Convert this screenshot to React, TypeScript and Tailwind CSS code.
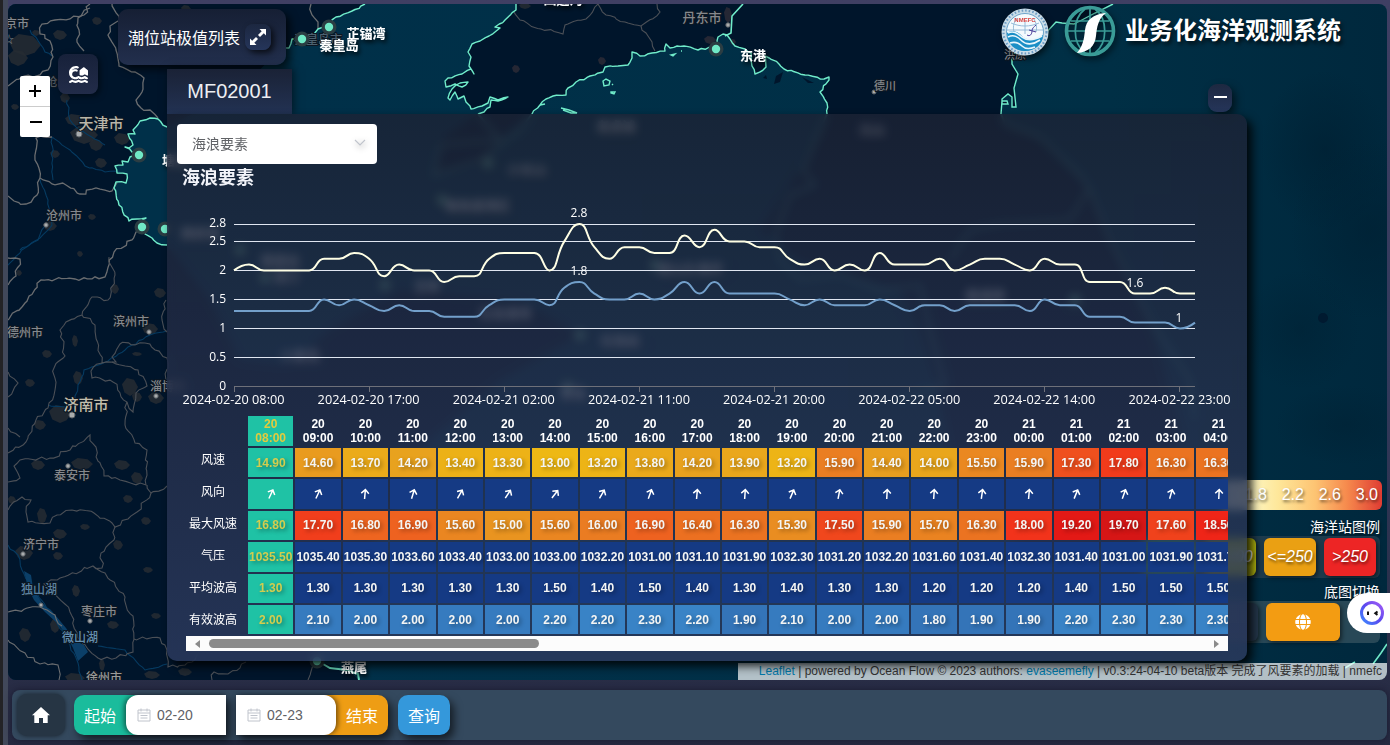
import React from "react";
import { FaHouseTsunami } from "react-icons/fa6";
import { FaGlobe } from "react-icons/fa";

type Pt = [number, number];

const parse = (s: string): Pt[] =>
  s.split(" ").map((p) => p.split(",").map(Number) as unknown as Pt);

/* Subdivides a polyline with a deterministic wobble so borders look natural. */
function rough(s: string, amp = 2, step = 4): string {
  const pts = parse(s);
  let seed = pts.length * 37 + Math.round(pts[0][0]);
  const rnd = () => {
    seed = (seed * 16807 + 11) % 2147483647;
    return (seed / 2147483647 - 0.5) * 2;
  };
  const out: string[] = [];
  pts.forEach((p, i) => {
    if (i > 0) {
      const a = pts[i - 1];
      const n = Math.floor(Math.hypot(p[0] - a[0], p[1] - a[1]) / step);
      for (let k = 1; k < n; k++) {
        const t = k / n;
        out.push(
          `${(a[0] + (p[0] - a[0]) * t + rnd() * amp).toFixed(1)},${(a[1] + (p[1] - a[1]) * t + rnd() * amp).toFixed(1)}`,
        );
      }
    }
    out.push(`${p[0]},${p[1]}`);
  });
  return out.join(" ");
}

const BOHAI =
  "167,127 158,119 150,118 140,121 133,130 135,134 128,134 133,145 129,148 125,147 132,152 138,155 130,157 128,162 122,161 123,165 115,166 117,173 127,174 126,183 116,182 114,188 119,205 129,221 137,219 146,218 140,223 145,234 152,238 157,243 167,245";
const QHD = "365,4 352,11 336,17 328,24 318,29 314,34 302,38 292,39 289,48 280,49";
const LIAO_W =
  "516,4 516,10 505,20 495,27 500,28 489,36 480,41 472,44 468,52 471,57 469,66 474,74 471,69 462,74 448,78 445,81 446,87 455,84 462,87 468,82 460,83 452,89 448,98 450,100 455,92 458,99 464,96 466,102 470,106 471,109 482,106 488,103 490,97 498,100 508,97 498,101 491,100 490,107 484,112 478,114";
const LIAO_E =
  "532,114 540,105 546,99 553,96 566,95 568,88 576,82 590,76 603,72 605,67 618,66 628,65 632,58 632,52 640,56 652,53 665,51 666,44 670,48 684,46 698,50 712,47 717,44 718,37 723,34 727,35 735,46 745,49 751,53 752,66 755,74 766,67 765,56 779,64 784,69 805,75 824,79 829,77 829,80 820,92 827,103 827,114";
const KOREA_E =
  "1113,4 1095,13 1078,22 1074,24 1062,23 1056,22 1044,35 1012,55 1012,64 1018,74 1014,88 1016,107 1012,107 1012,97 1008,94 1002,99 1002,104 1008,104 1007,101 1002,101 1001,114";

const BORDERS = [
  "90,4 84,15 70,19 55,20 42,24 40,34 50,41 53,57 48,70 40,75 24,76 8,86",
  "90,8 78,18 79,30 77,42 84,51",
  "112,4 120,20 110,26 108,35 116,50 119,66 135,72 144,78 142,92 136,100 141,108 150,110 158,118",
  "52,137 36,138 35,160 40,178 52,184 66,185 80,194 96,188 112,191 117,183",
  "40,178 37,195 26,204 14,201 8,196",
  "311,4 312,15 318,22 318,29",
  "8,320 25,303 41,280 75,279 105,277 114,252 132,240 140,226",
  "8,258 20,259 16,276 8,285",
  "109,257 115,275 108,300 92,297 82,315 66,322 60,330 65,356 54,368 55,390 48,408 36,420 26,442 8,453",
  "82,315 95,325 102,363 116,362 112,357 120,344 145,343 155,350 167,358 166,380",
  "102,363 91,371 92,378 113,382 127,402 133,412 136,393 147,386 138,370 112,362",
  "127,402 125,425 135,443 147,450 146,485 120,480 104,476 90,435 70,450 50,458 20,460 14,466 20,478 8,482",
  "147,485 151,493 137,512 128,519 115,527 112,523 94,513 72,510 57,515 50,523 28,522 26,512 31,500 22,497 8,510",
  "151,493 167,486",
  "115,527 114,540 101,553 102,568 93,566 60,578 44,584 55,594 70,612 80,640 98,658 116,658 133,652 134,626 125,597 105,573 93,566",
  "8,612 40,607 55,615 62,626",
  "8,640 25,653 40,664 58,665 59,680",
  "134,639 160,638 167,650 168,667 192,662 200,650",
  "212,680 214,672 228,674 240,668 246,662",
  "316,664 308,680",
  "514,12 520,20 541,29 563,34 565,25 586,19 598,4 606,15 625,22 641,26 660,12 657,4",
  "641,26 648,36 652,42 655,51",
  "8,372 18,383 8,397",
  "166,300 162,320 167,332",
  "8,428 20,437",
];

const RIVERS = [
  "52,137 70,150 85,166 105,172 120,172",
  "52,138 53,180",
  "30,30 45,52 52,56",
  "67,100 70,120 80,130 105,145",
  "40,178 48,200 52,225 40,238 25,248 8,265",
  "20,250 38,240 45,226",
  "75,400 78,385 84,370 108,361 125,350 150,335 167,331",
  "48,405 65,407 76,398",
  "8,545 18,555 22,570 30,585 50,610 70,645 78,663 82,680",
  "98,646 125,650 145,670 167,664",
];

const BLOBS: [number, number, number, number][] = [
  [25, 45, 16, 11], [18, 58, 10, 8], [60, 35, 7, 5], [97, 21, 5, 4], [88, 76, 9, 6], [65, 98, 5, 5], [75, 120, 10, 6],
  [84, 135, 14, 9], [96, 145, 7, 6], [122, 139, 8, 6], [101, 163, 6, 5], [55, 154, 5, 4], [50, 226, 7, 5], [92, 217, 4, 3],
  [15, 107, 4, 3], [36, 33, 4, 3], [236, 60, 18, 4], [75, 341, 3, 6], [47, 354, 5, 4], [78, 378, 5, 7], [130, 387, 8, 9],
  [60, 414, 11, 9], [40, 425, 6, 5], [30, 383, 5, 4], [38, 465, 7, 5], [82, 464, 11, 6], [122, 465, 8, 5], [137, 478, 6, 6],
  [156, 398, 8, 6], [150, 329, 8, 6], [160, 293, 6, 5], [115, 289, 4, 5], [19, 273, 3, 3], [42, 516, 5, 8], [60, 534, 7, 5],
  [24, 553, 9, 7], [85, 527, 5, 3], [58, 556, 5, 4], [76, 591, 4, 6], [118, 545, 5, 5], [148, 570, 5, 3], [156, 616, 5, 3],
  [25, 635, 6, 7], [55, 626, 5, 7], [113, 625, 6, 4], [75, 678, 10, 5], [152, 675, 8, 4], [102, 665, 3, 6], [128, 499, 5, 4],
  [146, 521, 5, 4], [516, 69, 4, 4], [602, 61, 4, 4], [710, 40, 6, 4], [733, 42, 3, 3], [728, 15, 4, 8], [185, 672, 7, 4],
  [80, 254, 3, 3], [137, 397, 5, 5], [137, 354, 5, 2], [186, 9, 5, 4], [525, 6, 6, 3], [12, 500, 4, 4],
];

function MapCanvas() {
  const land = "#00152b";
  const cities: [string, number, number, number, string][] = [
    ["京市", 17, 28, 12, "#858a90"],
    ["天津市", 101, 129, 15, "#b9b5a8"],
    ["沧州市", 64, 220, 12, "#85888c"],
    ["滨州市", 131, 326, 12, "#85888c"],
    ["德州市", 25, 337, 12, "#85888c"],
    ["淄博市", 168, 391, 12, "#85888c"],
    ["济南市", 86, 410, 15, "#c3bfae"],
    ["泰安市", 72, 480, 12, "#85888c"],
    ["济宁市", 41, 549, 12, "#85888c"],
    ["独山湖", 39, 594, 12, "#5c83a1"],
    ["枣庄市", 99, 616, 12, "#85888c"],
    ["微山湖", 80, 642, 12, "#6590b0"],
    ["徐州市", 104, 682, 12, "#9a9a98"],
    ["丹东市", 702, 22, 13, "#85888c"],
    ["德川", 885, 90, 11, "#85888c"],
    ["洪原", 1015, 59, 11, "#85888c"],
    ["秦皇岛市", 318, 44, 12, "#4d6270"],
    ["沧", 52, 86, 11, "#50565e"],
  ];
  const stations: [number, number][] = [
    [302, 39], [329, 27], [139, 155], [142, 227], [165, 229], [716, 49], [317, 661],
    [488, 163], [442, 200], [240, 250], [265, 278], [385, 285], [580, 335], [655, 265], [1075, 300], [568, 387],
  ];
  const labels: [string, number, number][] = [
    ["芷锚湾", 366, 38], ["秦皇岛", 339, 50], ["东港", 753, 60], ["燕尾", 354, 672], ["塘沽", 175, 165],
    ["老虎滩", 616, 131], ["小长山", 527, 174], ["鲅鱼圈港区", 478, 210], ["黄骅港", 200, 238], ["蓬莱站", 280, 265],
    ["龙口", 286, 281], ["芝罘", 427, 291], ["成山头海洋", 690, 273], ["石岛站", 620, 345], ["石岛港湾", 505, 318],
    ["青岛", 573, 398], ["小麦岛", 300, 360], ["南浦港", 985, 300], ["元山", 872, 134], ["四道沟", 563, 4],
  ];
  return (
    <svg className="absolute inset-0 h-full w-full" viewBox="8 4 1379 676">
      <defs>
        <radialGradient id="deep" cx="0.5" cy="0.5" r="0.5">
          <stop offset="0" stopColor="#001e30" />
          <stop offset="1" stopColor="#001e30" stopOpacity="0" />
        </radialGradient>
        <linearGradient id="sea" x1="0" x2="1">
          <stop offset="0.2" stopColor="#003049" />
          <stop offset="0.8" stopColor="#002f45" />
          <stop offset="1" stopColor="#00283d" />
        </linearGradient>
        <filter id="halo" x="-20%" y="-20%" width="140%" height="160%">
          <feDropShadow dx="2" dy="3" stdDeviation="2" floodColor="#000" floodOpacity="0.8" />
        </filter>
      </defs>
      <rect x="8" y="4" width="1379" height="676" fill="url(#sea)" />
      <ellipse cx="1325" cy="150" rx="65" ry="80" fill="url(#deep)" opacity="0.6" />
      <ellipse cx="1370" cy="230" rx="80" ry="90" fill="url(#deep)" opacity="0.5" />
      <ellipse cx="1300" cy="330" rx="60" ry="60" fill="url(#deep)" opacity="0.4" />
      <ellipse cx="1323" cy="318" rx="5" ry="5" fill="#001a30" />
      <ellipse cx="1345" cy="425" rx="70" ry="40" fill="url(#deep)" opacity="0.4" />

      <polygon fill={land} points={`8,4 ${QHD} 240,90 200,110 ${BOHAI} 210,300 240,360 290,365 330,330 400,290 520,300 580,335 500,380 430,440 390,520 330,600 318,661 350,672 359,680 8,680`} />
      <polygon fill={land} points={`${LIAO_W} 440,140 435,175 480,165 510,130 ${LIAO_E} 800,170 760,230 800,260 900,290 920,330 940,400 960,500 1040,560 1150,540 1180,430 1150,320 1090,190 1040,140 1003,120 1001,114 ${KOREA_E.split(" ").reverse().join(" ")}`} />

      {BLOBS.map(([x, y, rx, ry], i) => (
        <polygon
          key={i}
          fill={i > 49 && i < 55 ? "#2b2a36" : "#262b33"}
          opacity="0.85"
          points={`${x - rx},${y - ry * 0.3} ${x - rx * 0.4},${y - ry} ${x + rx * 0.5},${y - ry * 0.8} ${x + rx},${y} ${x + rx * 0.6},${y + ry * 0.7} ${x},${y + ry} ${x - rx * 0.7},${y + ry * 0.6}`}
        />
      ))}
      {RIVERS.map((r, i) => (
        <polyline key={i} points={rough(r, 1)} fill="none" stroke="#053a60" strokeWidth="1.1" />
      ))}
      <polygon fill="#0b3f68" points="24,571 31,575 33,588 42,603 56,616 66,628 74,640 84,645 88,652 78,661 73,648 66,634 56,622 45,612 34,600 28,588" />
      {BORDERS.map((b, i) => (
        <polyline key={i} points={rough(b, i > 19 ? 1.4 : 1.8)} fill="none" stroke={i < 8 || i === 15 || i === 16 ? "#6a6d70" : "#4b5057"} strokeWidth={i < 8 ? 1.3 : 1.1} />
      ))}
      {[BOHAI, QHD, LIAO_W, LIAO_E].map((c, i) => (
        <polyline key={i} points={rough(c, 1.1, 3.5)} fill="none" stroke="#70ecca" strokeWidth="1.4" strokeLinejoin="round" />
      ))}
      <polyline points={KOREA_E} fill="none" stroke="#70ecca" strokeWidth="1.4" />
      <polyline points="725,36 731,33 732,16 743,4" fill="none" stroke="#70ecca" strokeWidth="1.6" />
      <path d="M603 81l3-2 4 2-1 4-5 1zM611 92l4 0-1 2-3-1zM612 84l1 1M671 55l4-1-2 2zM681 51l1 0M561 108l8 2 8 3-6 0-8-3M540 105l5-1" fill="none" stroke="#70ecca" strokeWidth="1.4" />
      <path d="M776 76l7-4-3 10-6 2zM763 78l3-3 1 4zM757 87l6 2M802 77l12 6-6 0z" fill="#00152b" />
      <g fill="none" stroke="#4c9c95" strokeWidth="2">
        <polyline points="827,114 803,170 815,185 790,195 775,235 780,260 800,280 840,275 880,290 920,285 930,330 945,385 900,400" />
        <polyline points="1001,114 1005,124 1040,137 1080,175 1090,190 1110,240 1150,320 1190,380 1195,420" />
        <polyline points="1088,190 1070,220 1000,224 970,230 950,260" />
        <polyline points="478,114 500,140 440,145 434,175 480,160 520,130 532,114" />
        <polyline points="318,661 330,668 347,670 358,674 359,680" stroke="#6fe8c8" />
      </g>
      <path d="M1373 664l8-11 6-9M1345 668l10-6" fill="none" stroke="#6fe8c8" strokeWidth="1.6" />

      <g fill="#a9acad">
        {[[79, 134, 3], [46, 225, 2.2], [149, 332, 2.2], [156, 396, 2.2], [72, 415, 3], [68, 466, 2.2], [23, 554, 2.2], [90, 621, 2.2], [41, 605, 2], [728, 25, 2.2], [874, 92, 2]].map(([x, y, r]) => (
          <circle key={`${x}-${y}`} cx={x} cy={y} r={r} stroke="#5c6268" />
        ))}
      </g>
      <g fontFamily="'Noto Sans CJK SC', sans-serif" textAnchor="middle" fontWeight="500">
        {cities.map(([t, x, y, s, c]) => (
          <text key={t} x={x} y={y} fontSize={s} fill={c} stroke="#0b1622" strokeWidth="2" paintOrder="stroke">{t}</text>
        ))}
        <text x="9" y="43" fontSize="10" fill="#85888c">☆</text>
      </g>
      {stations.map(([x, y]) => (
        <g key={`${x},${y}`}>
          <circle cx={x} cy={y} r="7.5" fill="#2b3d43" />
          <circle cx={x} cy={y} r="4.2" fill="#70e8c6" />
        </g>
      ))}
      <g fontFamily="'Noto Sans CJK SC', sans-serif" fontSize="13" fontWeight="600" fill="#fff" textAnchor="middle" filter="url(#halo)">
        {labels.map(([t, x, y]) => (
          <text key={t} x={x} y={y}>{t}</text>
        ))}
      </g>
    </svg>
  );
}

const significant = [
  2.0, 2.1, 2.0, 2.0, 2.0, 2.0, 2.2, 2.2, 2.3, 2.2, 1.9, 2.1, 2.0, 2.0, 1.8, 1.9, 1.9, 2.2, 2.3, 2.3, 2.3, 2.0, 2.5, 2.8,
  2.4, 2.2, 2.4, 2.4, 2.3, 2.3, 2.6, 2.4, 2.7, 2.5, 2.5, 2.4, 2.4, 2.2, 2.1, 2.2, 2.0, 2.1, 2.0, 2.3, 2.1, 2.1, 2.1, 2.2,
  2.0, 2.1, 2.2, 2.2, 2.1, 2.0, 2.2, 2.1, 2.1, 1.8, 1.8, 1.8, 1.6, 1.6, 1.7, 1.6, 1.6,
];
const mean = [
  1.3, 1.3, 1.3, 1.3, 1.3, 1.3, 1.5, 1.4, 1.5, 1.4, 1.3, 1.4, 1.3, 1.3, 1.2, 1.2, 1.2, 1.4, 1.5, 1.5, 1.5, 1.4, 1.7, 1.8,
  1.6, 1.5, 1.5, 1.6, 1.5, 1.6, 1.8, 1.6, 1.8, 1.6, 1.6, 1.6, 1.6, 1.5, 1.4, 1.5, 1.4, 1.4, 1.4, 1.5, 1.4, 1.3, 1.4, 1.4,
  1.3, 1.4, 1.4, 1.4, 1.4, 1.3, 1.5, 1.4, 1.4, 1.2, 1.2, 1.2, 1.1, 1.1, 1.1, 1.0, 1.1,
];

const px = (i: number) => 67 + i * 15.0156;
const py = (v: number) => 196.4 - v * 58;

/* Smooth line whose control points never leave the range of the neighbouring values. */
function smoothPath(values: number[]): string {
  const clamp = (v: number, a: number, b: number) => Math.max(Math.min(a, b), Math.min(Math.max(a, b), v));
  const p = values.map((v, i) => [px(i), py(v)] as Pt);
  let d = `M${p[0][0]},${p[0][1]}`;
  let c: Pt = p[0];
  for (let i = 1; i < p.length; i++) {
    let inn: Pt = p[i];
    let out: Pt = p[i];
    if (i < p.length - 1) {
      const l0 = Math.hypot(p[i][0] - p[i - 1][0], p[i][1] - p[i - 1][1]);
      const l1 = Math.hypot(p[i + 1][0] - p[i][0], p[i + 1][1] - p[i][1]);
      const r = l1 / (l0 + l1);
      const vx = p[i + 1][0] - p[i - 1][0];
      const vy = p[i + 1][1] - p[i - 1][1];
      out = [clamp(p[i][0] + vx * 0.5 * r, p[i][0], p[i + 1][0]), clamp(p[i][1] + vy * 0.5 * r, p[i][1], p[i + 1][1])];
      inn = [
        clamp(p[i][0] - ((out[0] - p[i][0]) * l0) / l1, p[i - 1][0], p[i][0]),
        clamp(p[i][1] - ((out[1] - p[i][1]) * l0) / l1, p[i - 1][1], p[i][1]),
      ];
      out = [p[i][0] + ((p[i][0] - inn[0]) * l1) / l0, p[i][1] + ((p[i][1] - inn[1]) * l1) / l0];
    }
    d += `C${c[0].toFixed(1)},${c[1].toFixed(1)} ${inn[0].toFixed(1)},${inn[1].toFixed(1)} ${p[i][0].toFixed(1)},${p[i][1].toFixed(1)}`;
    c = out;
  }
  return d;
}

function WaveChart() {
  const ticks = ["20 08:00", "20 17:00", "21 02:00", "21 11:00", "21 20:00", "22 05:00", "22 14:00", "22 23:00"];
  return (
    <svg className="block h-[222px] w-[1080px] shrink-0 overflow-hidden" viewBox="0 0 1080 222" fontFamily="'Open Sans', 'Noto Sans', sans-serif" fontSize="12" fontWeight="500" fill="#ffffff">
      {[2.8, 2.5, 2, 1.5, 1, 0.5, 0].map((v) => (
        <g key={v}>
          <line x1="67" x2="1028" y1={Math.floor(py(v)) + 0.5} y2={Math.floor(py(v)) + 0.5} stroke={v ? "#e0e6f1" : "#6e7079"} />
          <text x="59" y={py(v) + 3.2} textAnchor="end">{v}</text>
        </g>
      ))}
      <path d={smoothPath(mean)} fill="none" stroke="#73a0cb" strokeWidth="2" />
      <path d={smoothPath(significant)} fill="none" stroke="#ffffe5" strokeWidth="2" />
      {ticks.map((t, i) => (
        <g key={t}>
          <line x1={Math.floor(px(i * 9)) + 0.5} x2={Math.floor(px(i * 9)) + 0.5} y1="197" y2="202" stroke="#6e7079" />
          <text x={px(i * 9) - 0.5} y="214" textAnchor="middle" textLength="102" lengthAdjust="spacingAndGlyphs">{`2024-02-${t}`}</text>
        </g>
      ))}
      <g textAnchor="middle">
        <text x="412" y="27">2.8</text>
        <text x="412" y="85">1.8</text>
        <text x="968" y="97">1.6</text>
        <text x="1012" y="132">1</text>
      </g>
    </svg>
  );
}

const wind = ["14.90", "14.60", "13.70", "14.20", "13.40", "13.30", "13.00", "13.20", "13.80", "14.20", "13.90", "13.20", "15.90", "14.40", "14.00", "15.50", "15.90", "17.30", "17.80", "16.30", "16.30"];
const angle = [25, 25, 5, 17, 30, 33, 38, 30, 20, 5, 4, 23, 11, 3, 4, 8, 5, 22, 20, 16, 3];
const gust = ["16.80", "17.70", "16.80", "16.90", "15.60", "15.00", "15.60", "16.00", "16.90", "16.40", "16.30", "15.30", "17.50", "15.90", "15.70", "16.30", "18.00", "19.20", "19.70", "17.60", "18.50"];
const pressure = ["1035.50", "1035.40", "1035.30", "1033.60", "1033.40", "1033.00", "1033.00", "1032.20", "1031.00", "1031.10", "1031.90", "1032.30", "1031.20", "1032.20", "1031.60", "1031.40", "1032.30", "1031.40", "1031.00", "1031.90", "1031.70"];
const hour = (i: number) => `${String((8 + i) % 24).padStart(2, "0")}:00`;

const scale: [number, number[]][] = [
  [13, [238, 184, 20]], [14.2, [232, 162, 30]], [15, [233, 148, 32]], [16, [234, 124, 34]], [16.9, [238, 98, 32]],
  [17.6, [240, 66, 28]], [18.2, [243, 44, 26]], [19, [232, 26, 22]], [19.7, [214, 22, 22]],
];
function windColor(v: number): string {
  for (let i = 1; i < scale.length; i++) {
    if (v <= scale[i][0]) {
      const [a, ca] = scale[i - 1];
      const [b, cb] = scale[i];
      const t = (v - a) / (b - a);
      return `rgb(${ca.map((c, k) => Math.round(c + (cb[k] - c) * t)).join(",")})`;
    }
  }
  return "rgb(214,22,22)";
}

function Cell({ first, bg, children }: { first: boolean; bg: string; children: React.ReactNode }) {
  return (
    <div
      className={`flex h-[29.4px] w-[45.4px] shrink-0 items-center justify-center whitespace-nowrap text-[12px] font-semibold [text-shadow:2px_2px_4px_rgba(0,0,0,0.4)] ${first ? "text-[#d3cd4e]" : "text-[#f4f5f4]"}`}
      style={{ background: first ? "#1fc2a5" : bg }}
    >
      {children}
    </div>
  );
}

function Row({ cells }: { cells: { bg: string; node: React.ReactNode }[] }) {
  return (
    <div className="flex gap-[2px]">
      {cells.map((c, i) => (
        <Cell key={i} first={i === 0} bg={c.bg}>{c.node}</Cell>
      ))}
    </div>
  );
}

function DataTable() {
  const navy = "#153a84";
  return (
    <div className="ml-[19px] mt-[4px] flex w-[1042px] flex-col overflow-hidden font-['Liberation_Sans',Arial,sans-serif]">
      <div className="flex h-[220px]">
        <div className="flex w-[62px] shrink-0 flex-col pt-[27px] font-['Noto_Sans_CJK_SC',sans-serif] text-[12px] text-[#ffffff]">
          {["风速", "风向", "最大风速", "气压", "平均波高", "有效波高"].map((l) => (
            <div key={l} className="flex h-8 items-center justify-center pr-[8px]">
              <span className="whitespace-nowrap">{l}</span>
            </div>
          ))}
        </div>
        <div className="flex flex-col gap-[2px]">
          <div className="flex h-[30px] gap-[2px]">
            {wind.map((_, i) => (
              <div key={i} className={`w-[45.4px] shrink-0 pt-[1px] text-center text-[12px] font-bold leading-[14px] ${i === 0 ? "bg-[#1fc2a5] text-[#e3cb3d]" : "text-white"}`}>
                {i < 16 ? "20" : "21"}
                <br />
                {hour(i)}
              </div>
            ))}
          </div>
          <Row cells={wind.map((v) => ({ bg: windColor(+v), node: v }))} />
          <Row
            cells={angle.map((a) => ({
              bg: navy,
              node: (
                <svg viewBox="0 0 12 12" className="h-3 w-3" fill="none" stroke="#fff" strokeWidth="1.5" style={{ transform: `rotate(${a}deg)` }}>
                  <path d="M6 11V1.800M2.200 5.400L6 1.600l3.800 3.800" />
                </svg>
              ),
            }))}
          />
          <Row cells={gust.map((v) => ({ bg: windColor(+v), node: v }))} />
          <Row cells={pressure.map((v) => ({ bg: navy, node: v }))} />
          <Row cells={mean.slice(0, 21).map((v) => ({ bg: navy, node: v.toFixed(2) }))} />
          <Row cells={significant.slice(0, 21).map((v) => ({ bg: v < 2 ? "#3474b8" : v > 2.15 ? "#3983c6" : "#367bbf", node: v.toFixed(2) }))} />
        </div>
      </div>
      <div className="flex h-[15px] items-center bg-[#fcfcfc] px-[9px]">
        <svg viewBox="0 0 5 8" className="h-2 w-[5px]" fill="#8b8b8b"><path d="M5 0v8L0 4z" /></svg>
        <div className="ml-[9px] h-[9px] w-[330px] rounded-full bg-[#8b8b8b]" />
        <svg viewBox="0 0 5 8" className="ml-auto h-2 w-[5px]" fill="#8b8b8b"><path d="M0 0v8l5-4z" /></svg>
      </div>
    </div>
  );
}

function StationPanel() {
  return (
    <section className="absolute left-[159px] top-[65px] w-[1080px]">
      <div className="flex h-[45px] items-end justify-between pr-[15px]">
        <h2 className="flex h-full w-[125px] items-center justify-center bg-linear-to-b from-[#1a2236] to-[#223253] pb-[2px] font-['Liberation_Sans',Arial,sans-serif] text-[20px] text-[#eceef2] shadow-[2px_0_8px_rgba(0,0,0,0.5)]">
          MF02001
        </h2>
        <button className="mb-[2px] flex h-7 w-6 items-center justify-center rounded-[9px] bg-linear-to-b from-[#1d2840] to-[#25355a] shadow-[3px_4px_8px_rgba(0,0,0,0.6)]">
          <span className="mb-[2px] h-[2px] w-[13px] bg-white" />
        </button>
      </div>
      <div className="flex h-[547px] flex-col rounded-[10px] rounded-tl-none bg-linear-to-b from-[#1c2335]/80 to-[#2b3a5e]/84 shadow-[5px_5px_10px_rgba(0,0,0,0.85)] backdrop-blur-[5px]">
        <div className="ml-[10px] mt-[10px] flex h-10 w-[200px] shrink-0 items-center justify-between rounded bg-white pb-[2px] pl-[15px] pr-[11px] font-['Noto_Sans_CJK_SC',sans-serif] text-[14px] text-[#606266]">
          <span>海浪要素</span>
          <svg viewBox="0 0 12 8" className="h-2 w-3 drop-shadow-[1px_2px_3px_rgba(0,0,0,0.4)]" fill="none" stroke="#c0c4cc" strokeWidth="1.2"><path d="M1 1l5 5 5-5" /></svg>
        </div>
        <h3 className="ml-[15px] flex h-[26px] shrink-0 items-center pb-[2px] font-['Noto_Sans_CJK_SC',sans-serif] text-[18px] font-bold text-[#f1f3f8]">海浪要素</h3>
        <WaveChart />
        <DataTable />
      </div>
    </section>
  );
}

function Legends() {
  const box = "flex h-[38px] items-center justify-center rounded-[6px] shadow-[2px_2px_4px_rgba(0,0,0,0.5)]";
  return (
    <aside className="absolute right-[5px] top-[476px] flex flex-col items-end text-white [text-shadow:1px_2px_3px_rgba(0,0,0,0.6)]">
      <div className="flex h-[30px] w-[160px] items-center justify-end gap-[14.800px] rounded-r-[6px] bg-[linear-gradient(90deg,#dfe8d8_0%,#fdf6c3_18%,#fee79a_35%,#fdc473_58%,#f68a4d_78%,#df3c33_100%)] pr-[4px] font-['Liberation_Sans',Arial,sans-serif] text-[16px]">
        <span>1.8</span><span>2.2</span><span>2.6</span><span>3.0</span>
      </div>
      <div className="mr-[2px] mt-[6px] h-[20px] font-['Noto_Sans_CJK_SC',sans-serif] text-[14px] leading-[20px]">海洋站图例</div>
      <div className="mr-[2px] flex h-[42px] items-center gap-2 rounded-[6px] bg-[#1d3b4d] px-1 font-['Liberation_Sans',Arial,sans-serif] text-[16px] italic">
        <div className={`${box} w-[52px] bg-[#2ec46b]`}>&lt;=150</div>
        <div className={`${box} w-[52px] bg-[#b5b80f]`}>&lt;=200</div>
        <div className={`${box} w-[52px] bg-[#eaa013]`}>&lt;=250</div>
        <div className={`${box} w-[52px] bg-[#ed2525]`}>&gt;250</div>
      </div>
      <div className="mr-[2px] mt-[3px] h-[20px] font-['Noto_Sans_CJK_SC',sans-serif] text-[14px] leading-[20px]">底图切换</div>
      <div className="mr-[2px] flex h-[42px] items-center gap-2 rounded-[6px] bg-[#284857] pl-1 pr-10">
        <div className={`${box} w-[74px] bg-[#24364a]`} />
        <div className={`${box} w-[74px] bg-[#f39c12]`}><FaGlobe size={16} /></div>
      </div>
    </aside>
  );
}

function Logos() {
  return (
    <header className="absolute left-[993px] top-px flex h-[54px] items-center">
      <svg viewBox="0 0 48 48" className="h-12 w-12 drop-shadow-[2px_3px_3px_rgba(0,0,0,0.6)]">
        <circle cx="24" cy="24" r="23.5" fill="#cbdde8" />
        <circle cx="24" cy="24" r="21.5" fill="none" stroke="#6d9cc4" strokeWidth="2.2" strokeDasharray="1.6 2" />
        <circle cx="24" cy="24" r="18.5" fill="#f4fafd" stroke="#4f92c0" strokeWidth="0.8" />
        <path d="M6 22h36M24 14v12M16 10c-4 5-4 10-3 14M32 10c4 5 4 10 3 14M10 15c9 4 19 4 28 0" fill="none" stroke="#8cb4d4" strokeWidth="0.9" />
        <path d="M6 25c6-4 11-1 15 3s11 6 21-1c0 9-8 16-18 16S6 36 6 25z" fill="#1b8fc6" />
        <path d="M7 29c6-3 10 0 14 4s11 4 18-1M9 35c6-2 9 0 12 3s8 3 13 1M7 25c6-3 10 1 14 4s11 4 20-1" fill="none" stroke="#e8f6fc" strokeWidth="1.6" />
        <path d="M26 27c3 2 5-1 5-4s2-4 4-6M28 22l7 2" fill="none" stroke="#4c3f9b" strokeWidth="1" />
        <text x="24" y="14" textAnchor="middle" fontSize="6" fontWeight="700" fill="#d6413f" fontFamily="'Liberation Sans', sans-serif">NMEFC</text>
      </svg>
      <svg viewBox="0 0 52 52" className="-mt-[2px] ml-[15px] h-[52px] w-[52px] drop-shadow-[2px_3px_3px_rgba(0,0,0,0.6)]">
        <g fill="none" stroke="#3a9c97">
          <circle cx="26" cy="26" r="23.5" strokeWidth="3.6" />
          <path d="M4 26h44M7 16h38M7 36h38M21 4C8 14 8 38 21 48M31 4c13 10 13 34 0 44M26 3v46" strokeWidth="1.7" />
        </g>
        <path d="M42 8C29 9 22 15 21 25c-1 9-2 16-8 23 12-1 18-7 19-17 1-9 2-17 10-23z" fill="#fff" />
      </svg>
      <h1 className="-mt-[7px] ml-[9px] whitespace-nowrap font-['Noto_Sans_CJK_SC',sans-serif] text-[24px] font-bold leading-none text-white [text-shadow:2px_3px_4px_rgba(0,0,0,0.7)]">
        业务化海洋观测系统
      </h1>
    </header>
  );
}

function MapArea() {
  return (
    <main className="relative h-[676px] w-[1379px] shrink-0 overflow-hidden rounded-[8px]">
      <MapCanvas />
      <Logos />
      <div className="absolute left-[110px] top-[5px] flex h-14 w-[168px] items-center rounded-[10px] bg-linear-to-b from-[#161f34] to-[#222f4d] pl-[10px] font-['Noto_Sans_CJK_SC',sans-serif] shadow-[4px_4px_8px_rgba(0,0,0,0.7)]">
        <span className="text-[16px] text-white">潮位站极值列表</span>
        <button className="ml-[5px] flex h-[26px] w-[26px] items-center justify-center rounded-[8px] bg-linear-to-b from-[#1c2740] to-[#25355a] shadow-[3px_3px_6px_rgba(0,0,0,0.7)]">
          <svg viewBox="0 0 16 16" className="h-4 w-4" fill="#fff"><path d="M9.500 0H16v6.500l-2.200-2.200L10 8 8 6l3.700-3.800zM6.500 16H0V9.500l2.200 2.200L6 8l2 2-3.700 3.800z" /></svg>
        </button>
      </div>
      <button className="absolute left-[50px] top-[50px] flex h-10 w-10 items-center justify-center rounded-[8px] bg-linear-to-b from-[#17213a] to-[#222c49] text-white shadow-[2px_2px_6px_rgba(0,0,0,0.5)]">
        <FaHouseTsunami size={19} />
      </button>
      <div className="absolute left-3 top-[72px] flex h-[61px] w-[30px] flex-col rounded-[2px] bg-white">
        <button className="flex h-[31px] items-center justify-center border-b border-[#ccc]">
          <svg viewBox="0 0 12 12" className="h-3 w-3"><path d="M0 6h12M6 0v12" stroke="#000" strokeWidth="2" /></svg>
        </button>
        <button className="flex flex-1 items-center justify-center">
          <svg viewBox="0 0 12 12" className="ml-[2px] h-3 w-3"><path d="M0 6h12" stroke="#000" strokeWidth="2" /></svg>
        </button>
      </div>
      <Legends />
      <footer className="absolute bottom-0 right-0 flex h-[17px] w-[649px] items-center justify-end whitespace-pre bg-white/70 pb-[1px] pr-[5px] font-['Liberation_Sans','Noto_Sans_CJK_SC',sans-serif] text-[12px] text-[#333]">
        <span className="text-[#0078a8]">Leaflet</span> | powered by Ocean Flow © 2023 authors: <span className="text-[#0078a8]">evaseemefly</span> | v0.3:24-04-10 beta版本 完成了风要素的加载 | nmefc
      </footer>
      <StationPanel />
    </main>
  );
}

function Calendar() {
  return (
    <svg viewBox="0 0 14 14" className="h-[14px] w-[14px] shrink-0" fill="none" stroke="#c0c4cc">
      <path d="M1 2h12v11H1zM1 5h12M4 .5v3M10 .5v3M3.500 7.500h7M3.500 10h7" />
    </svg>
  );
}

function Toolbar() {
  const shadow = "shadow-[4px_5px_8px_rgba(0,0,0,0.6)]";
  return (
    <nav className="ml-1 mt-[10px] flex h-[50px] w-[1375px] shrink-0 items-center rounded-[8px] bg-[#34495e] pl-[5px] font-['Noto_Sans_CJK_SC',sans-serif] text-[16px] text-white shadow-[0_0_6px_rgba(20,20,40,0.7)]">
      <button className="flex h-[42px] w-12 items-center justify-center rounded-[10px] bg-[#263544] shadow-[0_0_4px_rgba(0,0,0,0.5)]">
        <svg viewBox="0 0 18 16" className="h-4 w-[18px]" fill="#fff"><path d="M9 0l9 8.200h-2.300V16h-4.700v-5H7v5H2.300V8.200H0z" /></svg>
      </button>
      <div className={`ml-[9px] flex h-10 w-[152px] rounded-l-[10px] bg-[#1abc9c] ${shadow}`}>
        <span className="flex w-[52px] items-center justify-center">起始</span>
        <label className="flex w-[100px] items-center gap-[6px] rounded-l-[12px] bg-white pl-[11px] font-['Liberation_Sans',Arial,sans-serif] text-[14px] text-[#606266] shadow-[-2px_0_5px_rgba(0,0,0,0.5)]">
          <Calendar />02-20
        </label>
      </div>
      <div className={`ml-[10px] flex h-10 w-[152px] rounded-r-[10px] bg-[#ee9d14] ${shadow}`}>
        <label className="flex w-[100px] items-center gap-[6px] rounded-r-[12px] bg-white pl-[11px] font-['Liberation_Sans',Arial,sans-serif] text-[14px] text-[#606266] shadow-[2px_0_5px_rgba(0,0,0,0.5)]">
          <Calendar />02-23
        </label>
        <span className="flex w-[52px] items-center justify-center">结束</span>
      </div>
      <button className={`ml-[10px] flex h-10 w-[52px] items-center justify-center rounded-[10px] bg-[#3498db] ${shadow}`}>查询</button>
    </nav>
  );
}

export default function App() {
  return (
    <div className="relative flex h-[745px] w-[1390px] overflow-hidden bg-[#24283f]">
      <div className="w-[3px] bg-[#232326]" />
      <div className="w-[5px] bg-[#41485a]" />
      <div className="flex flex-1 flex-col bg-linear-to-b from-[#3f3f63] via-[#333a5c] to-[#262a41] pt-1">
        <MapArea />
        <Toolbar />
      </div>
      <div className="absolute right-0 top-[593px] flex h-10 w-[43px] items-center rounded-l-[20px] bg-white pl-3">
        <svg viewBox="0 0 26 26" className="h-[26px] w-[26px]">
          <defs>
            <linearGradient id="bot" x1="0" y1="1" x2="1" y2="0">
              <stop offset="0" stopColor="#3d8bff" /><stop offset="0.5" stopColor="#5b48ee" /><stop offset="1" stopColor="#a35cf5" />
            </linearGradient>
          </defs>
          <circle cx="13" cy="13" r="10.500" fill="#fff" stroke="url(#bot)" strokeWidth="3" />
          <path d="M9 11.500v3.500M18.500 11.500l-2.200 1.700 2.200 1.700" fill="none" stroke="#111" strokeWidth="2" />
        </svg>
      </div>
    </div>
  );
}
